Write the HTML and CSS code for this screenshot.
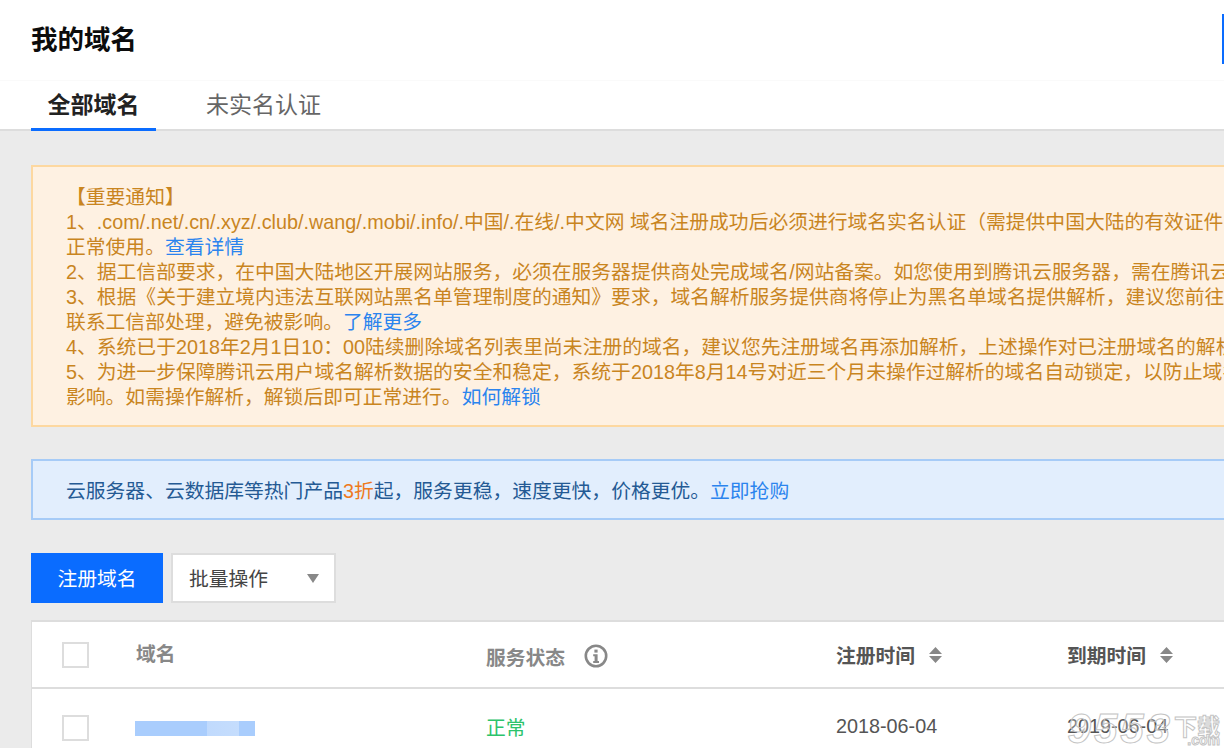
FILE: index.html
```html
<!DOCTYPE html>
<html lang="zh-CN">
<head>
  <meta charset="UTF-8">
  <title>我的域名</title>
  <link rel="stylesheet" href="styles.css">
</head>
<body>
  <header class="page-head">
    <h1>我的域名</h1>
    <span class="head-mark"></span>
  </header>
  <nav class="tabs">
    <a class="tab active">全部域名</a>
    <a class="tab">未实名认证</a>
  </nav>
  <main class="content">
    <section class="notice">
      <p>【重要通知】</p>
      <p>1、.com/.net/.cn/.xyz/.club/.wang/.mobi/.info/.中国/.在线/.中文网 域名注册成功后必须进行域名实名认证（需提供中国大陆的有效证件</p>
      <p>正常使用。<a>查看详情</a></p>
      <p>2、据工信部要求，在中国大陆地区开展网站服务，必须在服务器提供商处完成域名/网站备案。如您使用到腾讯云服务器，需在腾讯云</p>
      <p>3、根据《关于建立境内违法互联网站黑名单管理制度的通知》要求，域名解析服务提供商将停止为黑名单域名提供解析，建议您前往</p>
      <p>联系工信部处理，避免被影响。<a>了解更多</a></p>
      <p>4、系统已于2018年2月1日10：00陆续删除域名列表里尚未注册的域名，建议您先注册域名再添加解析，上述操作对已注册域名的解析</p>
      <p>5、为进一步保障腾讯云用户域名解析数据的安全和稳定，系统于2018年8月14号对近三个月未操作过解析的域名自动锁定，以防止域名</p>
      <p>影响。如需操作解析，解锁后即可正常进行。<a>如何解锁</a></p>
    </section>
    <section class="promo">云服务器、云数据库等热门产品<em>3折</em>起，服务更稳，速度更快，价格更优。<a>立即抢购</a></section>
    <div class="toolbar">
      <button class="btn-primary">注册域名</button>
      <div class="select">批量操作<i class="caret"></i></div>
    </div>
    <section class="table">
      <div class="row head">
        <div class="cell check"><span class="box"></span></div>
        <div class="cell name">域名</div>
        <div class="cell status">服务状态
          <svg class="info" viewBox="0 0 24 24" width="24" height="24"><circle cx="12" cy="12" r="10.2" fill="none" stroke="#888" stroke-width="2.6"/><rect x="10.400" y="5.600" width="3.200" height="3" fill="#888"/><path d="M9.200 10.200h4.400v6.800h1.400v2H9.200v-2h1.400v-4.800H9.200z" fill="#888"/></svg>
        </div>
        <div class="cell date">注册时间
          <svg class="sort" viewBox="0 0 13 16" width="13" height="16"><path d="M6.500 0L13 7H0zM6.500 16L0 9h13z" fill="#888"/></svg>
        </div>
        <div class="cell date">到期时间
          <svg class="sort" viewBox="0 0 13 16" width="13" height="16"><path d="M6.500 0L13 7H0zM6.500 16L0 9h13z" fill="#888"/></svg>
        </div>
      </div>
      <div class="row body">
        <div class="cell check"><span class="box"></span></div>
        <div class="cell name"><span class="blurred"></span></div>
        <div class="cell status ok">正常</div>
        <div class="cell date">2018-06-04</div>
        <div class="cell date">2019-06-04</div>
      </div>
    </section>
  </main>
  <div class="watermark">9553<span class="wm-cn">下载<small>.com</small></span></div>
</body>
</html>
```

FILE: styles.css
```css
* { box-sizing: border-box; }
body {
  margin: 0;
  height: 748px;
  overflow: hidden;
  position: relative;
  background: #ebebeb;
  color: #444;
  font-family: "Liberation Sans", "Noto Sans CJK SC", sans-serif;
  font-size: 19.8px;
}
a { color: #2b84ee; }

.page-head {
  height: 80px;
  background: #fff;
  padding: 0 0 0 31px;
  display: flex;
  align-items: center;
  justify-content: space-between;
}
.page-head h1 { margin: 0 0 6px; font-size: 26.500px; font-weight: 700; color: #0c0c0c; }
.head-mark { width: 2px; height: 50px; background: #0a6cff; margin-top: -2px; }

.tabs {
  height: 51px;
  background: #fff;
  border-top: 1px solid #fafafa;
  border-bottom: 2px solid #ddd;
  padding-left: 31px;
  display: flex;
}
.tab {
  height: 50px;
  font-size: 23px;
  line-height: 48px;
  color: #666;
}
.tab.active {
  width: 125px;
  text-align: center;
  color: #222;
  font-weight: 700;
  border-bottom: 3px solid #0a6cff;
  margin-right: 50px;
}

.content { padding: 34px 0 0 31px; width: 1300px; }

.notice {
  height: 262px;
  padding: 18px 0 0 33px;
  background: #fef1e2;
  border: 2px solid #fdd8a0;
  color: #c9851f;
  line-height: 25px;
  white-space: nowrap;
  overflow: hidden;
}
.notice p { margin: 0; }

.promo {
  height: 61px;
  margin-top: 32px;
  padding-left: 33px;
  background: #e2eefd;
  border: 2px solid #a6cbf7;
  color: #245a94;
  line-height: 60px;
}
.promo em { font-style: normal; color: #ee7a1d; }

.toolbar { display: flex; gap: 8px; margin-top: 33px; }
.btn-primary {
  width: 132px;
  height: 50px;
  padding: 0 0 2px;
  border: none;
  background: #0a6cff;
  color: #fff;
  font: inherit;
}
.select {
  width: 165px;
  height: 50px;
  padding: 0 15px 2px 16px;
  background: #fff;
  border: 2px solid #ddd;
  display: flex;
  align-items: center;
  justify-content: space-between;
}
.caret {
  border: 6.500px solid transparent;
  border-top: 9px solid #888;
  border-bottom: 0;
  margin-top: 2px;
}

.table {
  margin-top: 17px;
  background: #fff;
  border-top: 2px solid #ddd;
  border-left: 1px solid #ddd;
}
.row { display: flex; align-items: center; height: 78px; }
.row.head { height: 67px; border-bottom: 2px solid #ddd; font-weight: 700; color: #888; }
.row.head .name { padding-bottom: 4px; }
.row.head .status { padding-top: 3px; }
.row.body .status, .row.body .date { padding-bottom: 4px; }
.cell { display: flex; align-items: center; }
.check { width: 104px; padding-left: 30px; }
.box { width: 27px; height: 26px; border: 2px solid #ddd; background: #fff; }
.name { width: 350px; }
.status { width: 350px; }
.date { width: 231px; color: #555; }
.ok { color: #2cc36b; }
.info { margin-left: 19px; }
.sort { margin-left: 14px; }
.blurred {
  width: 120px;
  height: 15px;
  margin-left: -1px;
  background: linear-gradient(90deg, #a9cdfd 60%, #c0dafd 60%, #c5ddfd 87%, #a9cdfd 87%);
}

.watermark {
  position: absolute;
  right: 4px;
  bottom: 3px;
  display: flex;
  align-items: flex-start;
  font: italic 700 42px/32px "Liberation Sans", sans-serif;
  letter-spacing: 3px;
  color: rgba(255, 255, 255, 0.25);
  -webkit-text-stroke: 1px #c4c4c4;
}
.wm-cn {
  position: relative;
  width: 46px;
  margin-left: 1px;
  font: 700 23px/24px "Noto Sans CJK SC", sans-serif;
  letter-spacing: 0;
  color: rgba(255, 255, 255, 0.7);
}
.wm-cn small {
  position: absolute;
  right: 0;
  top: 20px;
  font: 700 14px/14px "Liberation Sans", sans-serif;
}
```
